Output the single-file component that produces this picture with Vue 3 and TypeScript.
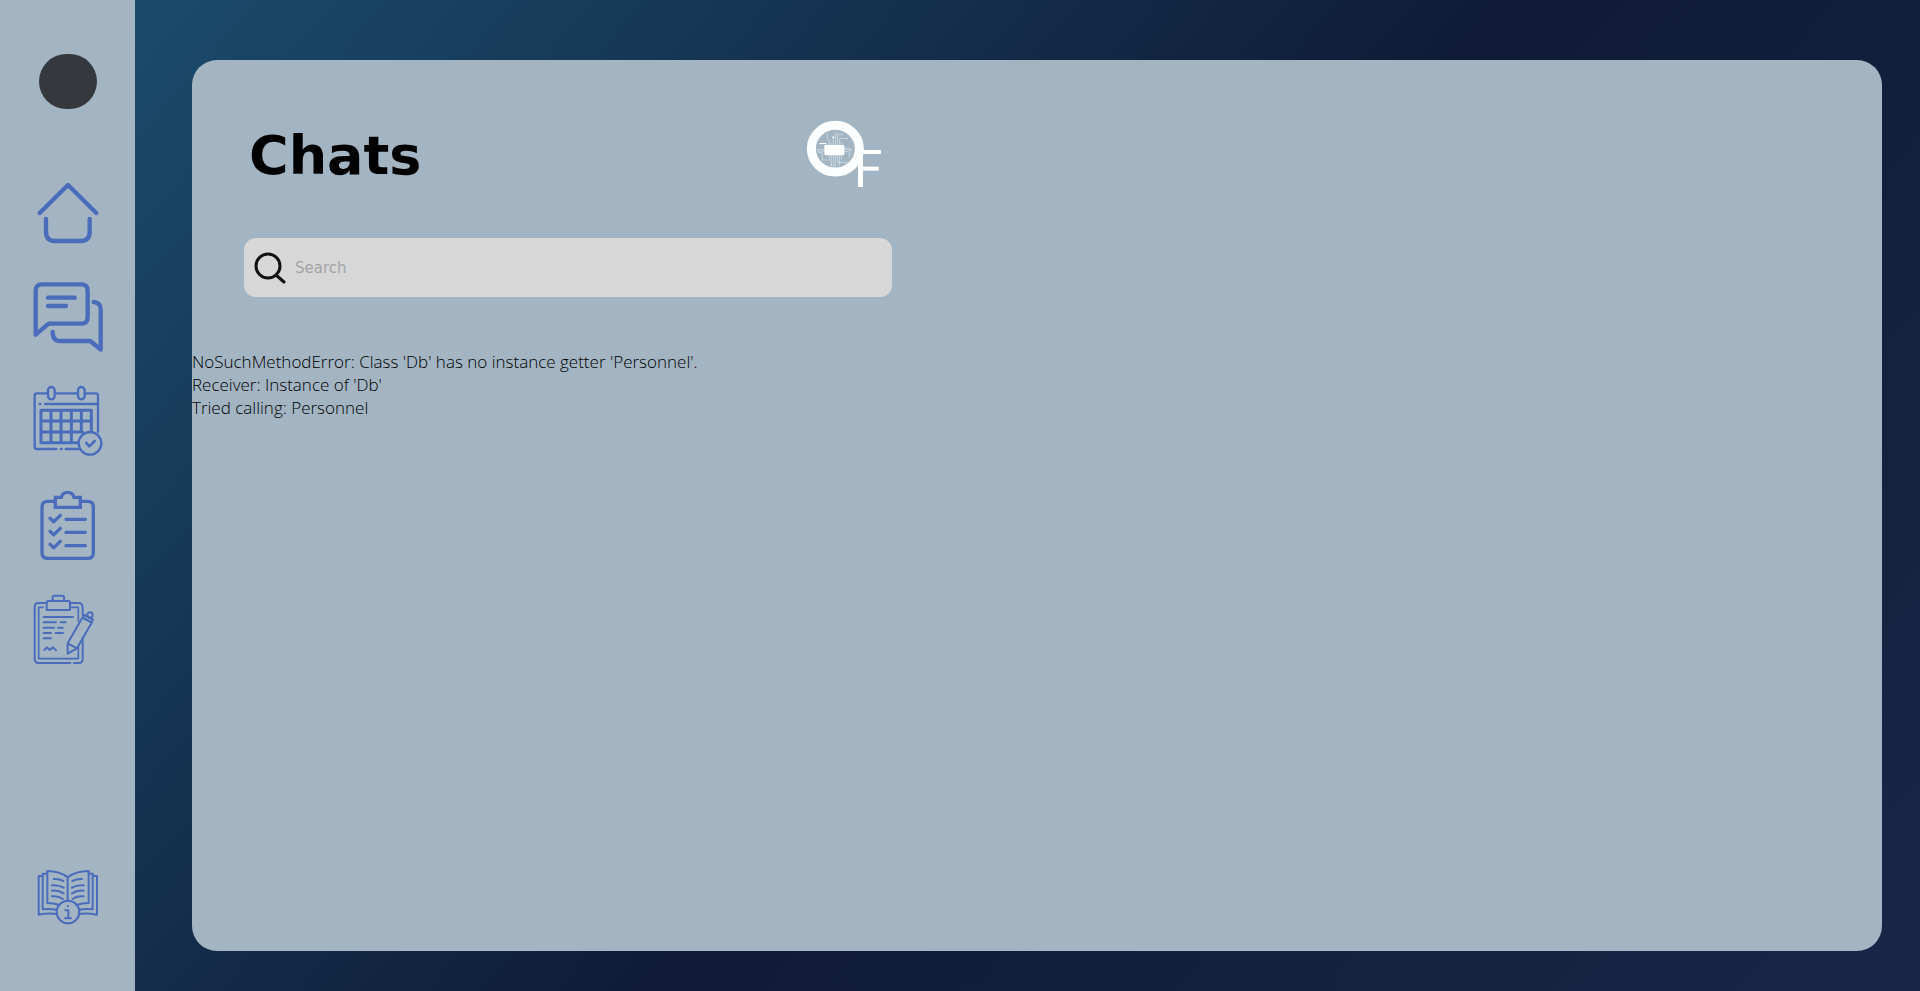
<script setup lang="ts">
import { ref } from 'vue'

const query = ref('')
const errorLines: string[] = [
  "NoSuchMethodError: Class 'Db' has no instance getter 'Personnel'.",
  "Receiver: Instance of 'Db'",
  'Tried calling: Personnel',
]
</script>

<template>
  <div class="app">
    <nav class="sidebar" aria-label="Main">
      <button class="avatar" type="button" aria-label="Profile"></button>
      <div class="links">
        <button class="nav" type="button" aria-label="Home">
          <svg viewBox="97 534 210 210" stroke-width="13">
            <path d="M117 639 L202 555 L287 639" />
            <path d="M136 657 V696 Q136 723 163 723 H240 Q267 723 267 696 V657" />
          </svg>
        </button>
        <button class="nav" type="button" aria-label="Chats">
          <svg viewBox="37 36 210 210" stroke-width="13">
            <path d="M45 194 V62 Q45 43 64 43 H182 Q201 43 201 62 V142 Q201 161 182 161 H84 Z" />
            <path d="M82 83 H162 M82 108 H136" />
            <path d="M219 96 Q240 98 240 118 V239 L209 213 H118 Q96 213 96 186" />
          </svg>
        </button>
        <button class="nav" type="button" aria-label="Calendar">
          <svg viewBox="37 33 210 210" stroke-width="7">
            <path d="M79 55 H48 Q42 55 42 61 V215 Q42 222 50 222 H107 M104 55 H170 M194 55 H226 Q232 55 232 62 V170 M135 222 H176 M120 222 H123 M57 87 H59 M73 87 H230" />
            <rect x="82" y="36" width="20" height="37" rx="10" />
            <rect x="172" y="36" width="20" height="37" rx="10" />
            <path stroke-width="9" d="M172 203 H61 V106 H212 V168 M61 138 H212 M61 171 H186 M91 106 V203 M121 106 V203 M152 106 V203 M182 106 V170" />
            <circle cx="208" cy="205" r="34" />
            <path stroke-width="8" d="M197 204 L206 214 L222 198" />
          </svg>
        </button>
        <button class="nav" type="button" aria-label="Tasks">
          <svg viewBox="37 30 210 210" stroke-width="10">
            <path d="M101 64 H81 Q64 64 64 81 V218 Q64 235 81 235 H201 Q218 235 218 218 V81 Q218 64 201 64 H181" />
            <path stroke-linejoin="miter" d="M104 82 V52 H122 Q126 37 141 37 Q156 37 160 52 H179 V82 Z" />
            <path d="M136 118 H194 M136 157 H194 M136 197 H194 M88 115 L99 125 L119 106 M88 154 L99 164 L119 145 M88 193 L99 203 L119 184" />
          </svg>
        </button>
        <button class="nav" type="button" aria-label="Reports">
          <svg viewBox="37 27 210 210" stroke-width="6">
            <path d="M78 54 H54 Q42 54 42 66 V222 Q42 234 54 234 H149 M160 234 H174 Q186 234 186 222 V158 M148 54 H174 Q185 54 186 67 V91" />
            <path stroke-width="5" d="M67 67 H54 V221 H173 V181 M149 67 H173 V108" />
            <path d="M78 75 V53 Q78 48 83 48 H143 Q148 48 148 53 V75 Z M96 47 V37 Q96 32 101 32 H125 Q130 32 130 37 V47" />
            <path d="M69 96 H157 M69 112 H106 M120 112 H135 M69 128 H100 M112 128 H126 M69 144 H91 M105 144 H127 M69 160 H91 M71 195 L79 187 L87 195 L97 187 L106 196" />
            <path d="M141 175 L185 98 L213 113 L169 190 Z M141 175 L141 206 L169 190 M191 90 L187 98 L213 112 L217 104 Z" />
            <circle cx="208" cy="90" r="8" />
          </svg>
        </button>
      </div>
      <button class="nav help" type="button" aria-label="Guide">
        <svg viewBox="37 21 210 210" stroke-width="6">
          <path d="M141 67 Q117 48 80 48 V144 Q99 144 116 150 M141 67 Q165 48 204 48 V144 Q184 144 167 150 M141 67 V137" />
          <path d="M79 56 H66 V163 Q88 160 107 164 M67 63 H54 V179 Q82 173 109 177 M204 56 H216 V163 Q196 160 176 164 M216 63 H229 V179 Q201 173 174 177" />
          <path d="M99 72 Q115 71 128 78 M94 91 Q113 89 129 98 M94 107 Q113 105 129 115 M94 124 Q113 122 127 132 M184 72 Q168 71 155 78 M189 91 Q169 89 154 98 M189 107 Q169 105 154 115 M189 124 Q169 122 156 132" />
          <circle cx="142" cy="171" r="34" />
          <path d="M134 166 H143 V189 M133 190 H151 M141 153 H142" />
        </svg>
      </button>
    </nav>

    <div class="stage">
      <main class="panel">
        <section class="top">
          <header class="head">
            <h1>Chats</h1>
            <svg class="logo" viewBox="48 45 228 204" aria-hidden="true">
              <ellipse cx="136" cy="131" rx="72" ry="70" fill="none" stroke="#fcfeff" stroke-width="27" />
              <g fill="none" stroke="#dbe6ed" stroke-width="2">
                <path d="M80 133 H104 M80 138 H104 M90 116 H109 V122 M84 142 H97 V165 H112 M118 122 V106 L112 100 V86 M124 122 V112 M130 122 V98 M137 122 V82 M143 122 V88 H160 M149 122 V100 H171 M155 122 V112 M162 129 H178 M162 134 H184 M162 140 H178 V158" />
                <path d="M118 150 V168 M124 150 V182 M130 150 V186 M136 150 V187 M142 150 V172 H172 M148 150 V183 M154 150 V164" />
              </g>
              <g fill="#fff">
                <circle cx="130" cy="97" r="3" />
                <circle cx="171" cy="100" r="2" />
                <circle cx="181" cy="134" r="2" />
                <circle cx="124" cy="181" r="2" />
                <rect x="88" y="114" width="20" height="3" />
                <rect x="103" y="120" width="60" height="31" rx="4" />
                <rect x="204" y="135" width="15" height="111" />
                <rect x="204" y="135" width="69" height="12" />
                <rect x="204" y="185" width="62" height="12" />
              </g>
            </svg>
          </header>
          <form class="search" role="search" @submit.prevent>
            <label for="search" aria-label="Search">
              <svg viewBox="0 0 32 32">
                <circle cx="14" cy="14" r="12" />
                <path d="M22 23 L30 30" />
              </svg>
            </label>
            <input id="search" v-model="query" type="text" placeholder="Search" />
          </form>
        </section>
        <div class="error" role="alert">
          <p v-for="line in errorLines" :key="line">{{ line }}</p>
        </div>
      </main>
    </div>
  </div>
</template>

<style>
body {
  margin: 0;
}
</style>

<style scoped>
.app {
  display: grid;
  grid-template-columns: 135px 1fr;
  min-height: 100vh;
  font-family: "Open Sans", "Noto Sans", sans-serif;
}
.sidebar {
  display: flex;
  flex-direction: column;
  align-items: center;
  box-sizing: border-box;
  padding: 54px 0 59px;
  background: #a3b5c3;
}
button {
  padding: 0;
  border: 0;
  background: none;
  cursor: pointer;
}
.avatar {
  width: 58px;
  height: 55px;
  border-radius: 28px;
  background: #35393d;
}
.links {
  display: flex;
  flex-direction: column;
  gap: 34px;
  margin-top: 69px;
}
.nav {
  width: 70px;
  height: 70px;
}
.help {
  margin-top: auto;
}
svg {
  display: block;
}
.nav svg {
  width: 100%;
  height: 100%;
  overflow: visible;
  fill: none;
  stroke: #4a6cba;
  stroke-linecap: round;
  stroke-linejoin: round;
}
.stage {
  display: flex;
  box-sizing: border-box;
  padding: 60px 38px 40px 57px;
  background: linear-gradient(131deg, #1b4b6b 0%, #0f1b36 52%, #182747 100%);
}
.panel {
  flex: 1;
  border-radius: 25px;
  background: #a3b5c3;
}
.top {
  display: grid;
  grid-template-columns: 52px 19fr 29fr;
}
.head,
.search {
  grid-column: 2;
}
.head {
  display: flex;
  justify-content: space-between;
  align-items: center;
  height: 68px;
  margin-top: 60px;
  padding: 0 10px 0 5px;
}
h1 {
  margin: 0;
  padding-top: 4px;
  font: bold 54px/68px "DejaVu Sans", sans-serif;
  color: #000;
}
.logo {
  width: 76px;
  height: 68px;
}
.search {
  display: flex;
  align-items: center;
  gap: 9px;
  box-sizing: border-box;
  height: 59px;
  margin-top: 50px;
  padding: 0 10px;
  border-radius: 12px;
  background: #d7d7d7;
}
.search svg {
  width: 32px;
  height: 32px;
  fill: none;
  stroke: #111;
  stroke-width: 3;
  stroke-linecap: round;
}
input {
  flex: 1;
  min-width: 0;
  padding: 0;
  border: 0;
  outline: 0;
  background: none;
  font: 15px/24px "DejaVu Sans", sans-serif;
  color: #111;
}
input::placeholder {
  color: #a3a5a5;
  opacity: 1;
}
.error {
  margin-top: 53px;
  font-size: 17px;
  font-weight: 300;
  line-height: 23px;
  color: #000;
}
.error p {
  margin: 0;
}
</style>
